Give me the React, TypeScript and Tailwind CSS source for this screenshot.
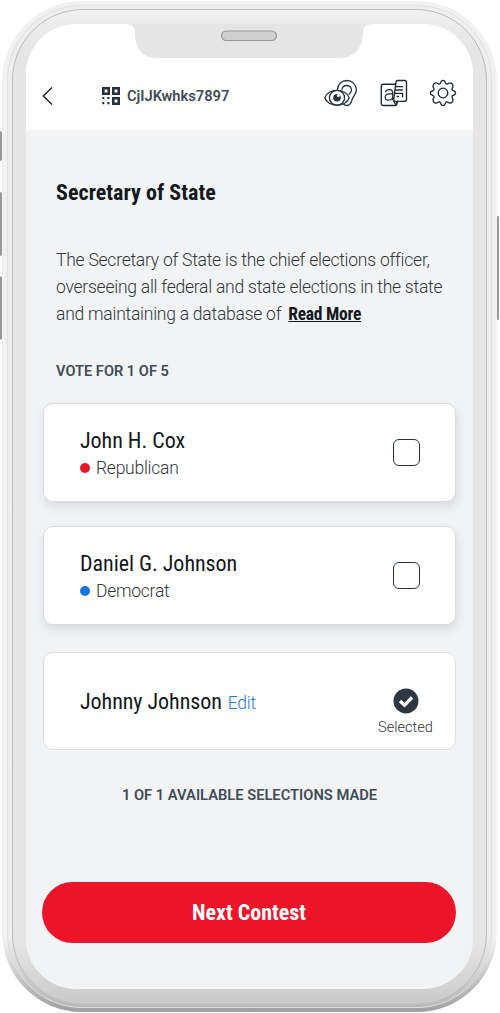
import React from "react";

const condensed = "font-['Roboto_Condensed','Roboto',sans-serif] [font-stretch:75%]";

function EyeEarIcon() {
  return (
    <svg width="34" height="28" viewBox="0 0 34 28" fill="none" stroke="#27323b" strokeWidth="1.3" strokeLinecap="round">
      <path d="M13.500 10.500C13.800 5 17.700 1.500 22.800 1.500S32.400 5.500 32.400 10.700c0 4.500-3.200 6.300-4.300 9.800-.9 3.300-2 6-5.200 6-1.400 0-2.600-.5-3.500-1.200" />
      <path d="M18 10.300c.5-2.700 2.500-3.800 4.700-3.800 2.900 0 4.800 2 4.800 4.500 0 2-1 3-2.300 4.300" />
      <path d="M.8 18.700C2.200 14 7.400 11.300 13 11.300s10.800 2.700 12.200 7.400C23.800 23.500 18.600 26.300 13 26.300S2.200 23.500.8 18.700Z" fill="#fff" />
      <ellipse cx="13" cy="18.700" rx="7.600" ry="7.400" />
      <circle cx="13" cy="18.700" r="3.800" fill="#27323b" stroke="none" />
      <circle cx="14.400" cy="16.400" r="1.500" fill="#fff" stroke="none" />
    </svg>
  );
}

function LanguageIcon() {
  return (
    <svg width="28" height="28" viewBox="0 0 28 28" fill="none" stroke="#1f2930" strokeWidth="1.400" strokeLinecap="round" strokeLinejoin="round">
      <rect x="1.300" y="5.300" width="15.500" height="21.200" rx="2" />
      <path d="M5.500 12.800c1-1.600 2.300-2.200 3.800-2.200 2.200 0 3.400 1.200 3.400 3.200v7M12.700 14.900H9.500c-2.600 0-4.300 1-4.300 3s1.400 3.200 3.400 3.200c2.300 0 4.100-1.400 4.100-3.500" strokeWidth="1.200" />
      <path d="M17.500 1.500h7.200c1.100 0 1.800.8 1.800 1.800v17.300c0 1-.7 1.800-1.800 1.800h-9.400c-1.100 0-1.800-.9-1.600-2L16 3c.1-.9.700-1.500 1.500-1.500Z" fill="#fff" />
      <path d="M13.800 22.500l2.200 3.500 1.600-3.500" />
      <path d="M16.200 7.700h6.500M15.800 11h6.500M15.300 14.300h7.200M22.600 14.300v3.600M17 17.300h1.500" strokeWidth="1.300" />
    </svg>
  );
}

function GearIcon() {
  return (
    <svg width="28" height="28" viewBox="0 0 28 28" fill="none" stroke="#1f2930" strokeWidth="1.300" strokeLinejoin="round">
      <path d="M12.300 2.300Q14 .4 15.700 2.300L16.600 4.200Q17.200 5.500 18.500 4.900L20.400 4Q23.800 3.600 24 7.600L23.100 9.500Q22.500 10.800 23.800 11.400L25.700 12.300Q27.600 14 25.700 15.700L23.800 16.600Q22.500 17.200 23.100 18.500L24 20.400Q23.800 24.400 20.400 24L18.500 23.100Q17.200 22.500 16.600 23.800L15.700 25.700Q14 27.600 12.300 25.700L11.400 23.800Q10.800 22.500 9.500 23.100L7.600 24Q4.200 24.400 4 20.400L4.900 18.500Q5.500 17.200 4.200 16.600L2.300 15.700Q.4 14 2.300 12.300L4.200 11.400Q5.500 10.800 4.900 9.500L4 7.600Q4.200 3.600 7.600 4L9.500 4.900Q10.800 5.500 11.400 4.200Z" />
      <circle cx="14" cy="14" r="4.800" />
    </svg>
  );
}

function QrIcon() {
  return (
    <svg width="18" height="18" viewBox="0 0 18 18" fill="#27323b">
      <path fillRule="evenodd" d="M0 0h8v8H0ZM2.600 2.600v2.800h2.800V2.600ZM10 0h8v8h-8ZM12.600 2.600v2.800h2.800V2.600ZM10 10h8v8h-8ZM12.600 12.600v2.800h2.800v-2.800Z" />
      <path d="M.3 10h2v2h-2ZM5.300 10h2.200v2H5.300ZM.3 15h2v2.200h-2ZM5.300 15h2.200v2.200H5.300Z" />
    </svg>
  );
}

function Candidate({ name, party, dot }: { name: string; party: string; dot: string }) {
  return (
    <div className="flex h-[99px] items-center justify-between rounded-[10px] border border-[#d9dce1] bg-white pr-[35px] pl-[36px] shadow-[1px_5px_10px_rgba(40,50,70,0.12)]">
      <div className="pt-[3px]">
        <div className={`${condensed} text-[22px] leading-[28px] tracking-[-0.03px] text-[#12181c]`}>{name}</div>
        <div className="flex h-[27px] items-center gap-[6px] text-[17.500px] font-light tracking-[-0.250px] text-[#30363b]">
          <span className={`size-[10px] rounded-full ${dot}`} />
          {party}
        </div>
      </div>
      <div className="size-[27px] rounded-[6px] border-[1.500px] border-[#27323b]" />
    </div>
  );
}

export default function App() {
  return (
    <div className="relative h-[1013px] w-[500px] overflow-hidden bg-white pt-px pr-[3px] pl-[2px] font-['Roboto',sans-serif]">
      <span className="absolute top-[131px] left-0 h-[30px] w-[2px] rounded-r bg-[#999]" />
      <span className="absolute top-[192px] left-0 h-[64px] w-[2px] rounded-r bg-[#999]" />
      <span className="absolute top-[276px] left-0 h-[64px] w-[2px] rounded-r bg-[#999]" />
      <span className="absolute top-[216px] left-[497px] h-[104px] w-[2px] rounded bg-[#999]" />

      <div className="h-[1011px] rounded-[80px] bg-linear-to-b from-[#f1f1f1] from-93% to-[#a0a0a0] px-[5px] pt-[4px]">
        <div className="h-[1003px] rounded-[75px] border border-[#e0e0e0] bg-linear-to-b from-[#eeeeee] from-93% to-[#b8b8b8] px-[4px] pt-[3px]">
          <div className="h-[996px] rounded-[71px] border border-[#bcbcbc] bg-[linear-gradient(to_bottom,#f0f0f0,#e5e5e5_4%,#e5e5e5_94%,#c9c9c9)] px-[13px] pt-[14px]">
            <div className="relative flex h-[965px] flex-col overflow-hidden rounded-[50px] bg-[#f2f3f5]">
              <svg className="absolute top-0 left-[98px]" width="250" height="34" viewBox="0 0 250 34">
                <path d="M0 0h250c-7 0-11 2-11 8 0 15-8 26-24 26H33C17 34 11 23 11 8c0-6-4-8-11-8Z" fill="#e5e5e5" />
                <rect x="97.500" y="7" width="55" height="9.500" rx="4.750" fill="#cfcfcf" stroke="#999" strokeWidth="1.200" />
              </svg>

              <header className="flex h-[106px] shrink-0 items-center bg-white pt-[37px] pr-[16px] pl-[16px]">
                <svg width="11" height="18" viewBox="0 0 11 18" fill="none" stroke="#14191d" strokeWidth="1.300">
                  <path d="M10 .5 1.200 9l8.800 8.500" />
                </svg>
                <div className="ml-[49px] flex items-center gap-[7px]">
                  <QrIcon />
                  <span className="pt-px text-[14.750px] font-semibold tracking-[-0.050px] text-[#414c56]">CjIJKwhks7897</span>
                </div>
                <div className="ml-auto flex items-center pb-[5px]">
                  <EyeEarIcon />
                  <span className="ml-[22px] flex"><LanguageIcon /></span>
                  <span className="ml-[21px] flex"><GearIcon /></span>
                </div>
              </header>

              <main className="flex flex-col pt-[47px] pr-[17px] pl-[17px]">
                <h1 className={`${condensed} pl-[13px] text-[22px] leading-[32px] font-bold tracking-[0.040px] text-[#12181c]`}>Secretary of State</h1>
                <p className="mt-[38px] pl-[13px] text-[17.500px] leading-[27px] font-light tracking-[-0.240px] whitespace-nowrap text-[#30363b]">
                  The Secretary of State is the chief elections officer,<br />
                  overseeing all federal and state elections in the state<br />
                  and maintaining a database of{" "}
                  <a className={`${condensed} ml-[3px] font-bold text-[#12181c] underline`}>Read More</a>
                </p>
                <h2 className="mt-[33px] pl-[13px] text-[14.600px] leading-[20px] font-semibold text-[#414c56]">VOTE FOR 1 OF 5</h2>
                <div className="mt-[22px] flex flex-col gap-[24px]">
                  <Candidate name="John H. Cox" party="Republican" dot="bg-[#ea1427]" />
                  <Candidate name="Daniel G. Johnson" party="Democrat" dot="bg-[#1673e8]" />
                </div>
                <div className="mt-[27px] flex h-[98px] items-center justify-between rounded-[10px] border border-[#dddfe3] bg-white pr-[21px] pl-[36px]">
                  <div className="flex items-baseline gap-[6px]">
                    <span className={`${condensed} text-[22px] tracking-[-0.050px] text-[#12181c]`}>Johnny Johnson</span>
                    <a className="text-[17.500px] font-light tracking-[-0.250px] text-[#2679df]">Edit</a>
                  </div>
                  <div className="flex w-[57px] flex-col items-center pt-[25px]">
                    <svg width="26" height="26" viewBox="0 0 26 26">
                      <circle cx="13" cy="13" r="12.500" fill="#2d3741" />
                      <path d="m7 13 4.500 4.200 7.500-7.700" fill="none" stroke="#fff" strokeWidth="3.300" />
                    </svg>
                    <span className="mt-px text-[14.600px] leading-[24px] font-light text-[#30363b]">Selected</span>
                  </div>
                </div>
                <p className="mt-[35px] text-center text-[14.700px] leading-[20px] font-semibold text-[#414c56]">1 OF 1 AVAILABLE SELECTIONS MADE</p>
                <button className={`${condensed} mt-[77px] -ml-px h-[61px] w-[414px] rounded-full bg-[#eb1428] text-[22px] font-bold text-white`}>Next Contest</button>
              </main>
            </div>
          </div>
        </div>
      </div>
    </div>
  );
}
